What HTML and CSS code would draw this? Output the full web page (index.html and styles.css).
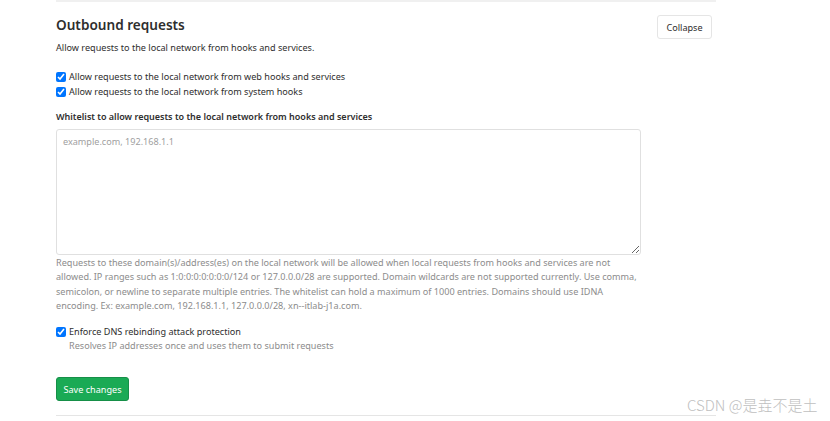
FILE: index.html
```html
<!DOCTYPE html>
<html>
<head>
<meta charset="utf-8">
<link rel="stylesheet" href="styles.css">
</head>
<body>
<section class="settings">
  <div class="settings-header">
    <div>
      <h4 class="title">Outbound requests</h4>
      <p class="lead">Allow requests to the local network from hooks and services.</p>
    </div>
    <button class="btn-collapse" type="button">Collapse</button>
  </div>
  <form class="settings-body">
    <label class="check"><input type="checkbox" checked><span>Allow requests to the local network from web hooks and services</span></label>
    <label class="check"><input type="checkbox" checked><span>Allow requests to the local network from system hooks</span></label>
    <div class="field">
      <label class="field-label">Whitelist to allow requests to the local network from hooks and services</label>
      <textarea class="whitelist" placeholder="example.com, 192.168.1.1"></textarea>
      <p class="help">Requests to these domain(s)/address(es) on the local network will be allowed when local requests from hooks and services are not allowed. IP ranges such as 1:0:0:0:0:0:0:0/124 or 127.0.0.0/28 are supported. Domain wildcards are not supported currently. Use comma, semicolon, or newline to separate multiple entries. The whitelist can hold a maximum of 1000 entries. Domains should use IDNA encoding. Ex: example.com, 192.168.1.1, 127.0.0.0/28, xn--itlab-j1a.com.</p>
    </div>
    <div class="dns">
      <label class="check"><input type="checkbox" checked><span>Enforce DNS rebinding attack protection</span></label>
      <p class="dns-help">Resolves IP addresses once and uses them to submit requests</p>
    </div>
    <button class="btn-save" type="button">Save changes</button>
  </form>
</section>
<div class="watermark">CSDN @是垚不是土</div>
</body>
</html>
```
FILE: styles.css
```css
html, body {
  margin: 0;
  padding: 0;
  background: #fff;
}
body {
  font-family: "Noto Sans", "Open Sans", sans-serif;
  color: #2e2e2e;
  width: 830px;
  height: 421px;
  overflow: hidden;
  position: relative;
}
.settings {
  margin-left: 56px;
  width: 660px;
  border-top: 2px solid #f0f0f0;
  border-bottom: 1px solid #e5e5e5;
  box-sizing: border-box;
}
.settings-header {
  display: flex;
  justify-content: space-between;
  align-items: flex-start;
  padding-top: 13px;
  padding-right: 4px;
}
.title {
  margin: 0;
  font-size: 13.6px;
  font-weight: 600;
  line-height: 20px;
  color: #2e2e2e;
}
.lead {
  margin: 6px 0 0;
  font-size: 9.1px;
  line-height: 14px;
  color: #2e2e2e;
}
.btn-collapse {
  margin-top: 0;
  width: 55px;
  height: 24px;
  background: #fff;
  border: 1px solid #e5e5e5;
  border-radius: 3px;
  font-family: inherit;
  font-size: 9.1px;
  color: #2e2e2e;
  padding: 0;
}
.settings-body {
  padding-top: 14px;
  padding-bottom: 14px;
}
.check {
  display: flex;
  align-items: center;
  font-size: 9.1px;
  line-height: 15px;
  color: #2e2e2e;
}
.check input {
  width: 10px;
  height: 10px;
  margin: 0 3px 0 0;
  accent-color: #0075ff;
}
.field {
  margin-top: 11px;
}
.field-label {
  display: block;
  font-size: 9px;
  font-weight: 600;
  line-height: 14px;
  margin-bottom: 5px;
}
.whitelist {
  display: block;
  width: 585px;
  height: 126px;
  box-sizing: border-box;
  border: 1px solid #e0e0e0;
  border-radius: 3px;
  padding: 5px 6px;
  font-family: inherit;
  font-size: 9.1px;
  margin: 0;
}
.whitelist::placeholder {
  color: #a0a0a0;
}
.help {
  margin: 1px 0 0;
  width: 585px;
  font-size: 9.1px;
  line-height: 14.3px;
  color: #8c8c8c;
}
.dns {
  margin-top: 11px;
}
.dns-help {
  margin: 0 0 0 13px;
  font-size: 9.1px;
  line-height: 14px;
  color: #8c8c8c;
}
.btn-save {
  margin-top: 24px;
  width: 73px;
  height: 24px;
  background: #1aaa55;
  color: #fff;
  border: 1px solid #168f48;
  border-radius: 3px;
  font-family: inherit;
  font-size: 9.1px;
  padding: 0;
}
.watermark {
  position: absolute;
  left: 687px;
  top: 394px;
  font-family: "Noto Sans CJK SC", sans-serif;
  font-size: 15px;
  font-weight: 300;
  color: #c0c0c0;
}
```
